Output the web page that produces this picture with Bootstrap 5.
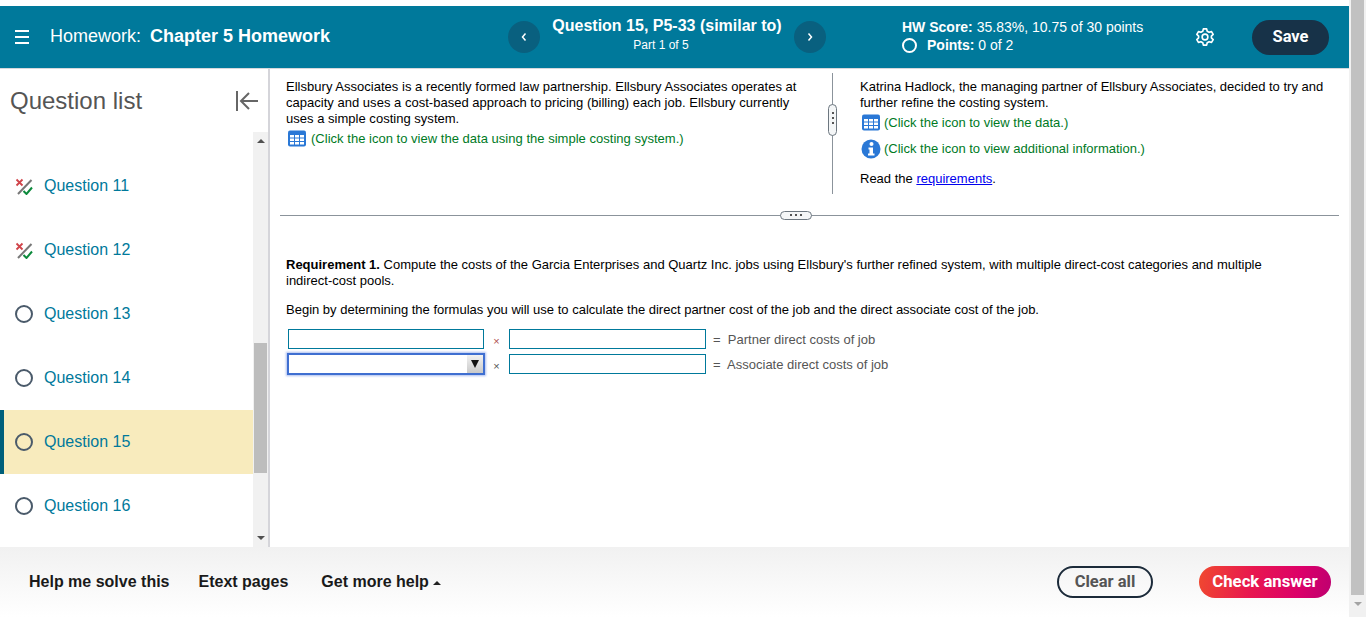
<!DOCTYPE html>
<html lang="en">
<head>
<meta charset="utf-8">
<title>Homework</title>
<link href="https://cdn.jsdelivr.net/npm/bootstrap@5.3.0/dist/css/bootstrap.min.css" rel="stylesheet">
<style>
html,body{height:617px;overflow:hidden;background:#fff;}
body{font-family:"Liberation Sans",Arial,sans-serif;color:#000;}
.shell{width:1366px;height:617px;}
.page-col{width:1349px;height:617px;padding-top:6px;}
.win-bar{width:17px;height:617px;background:#f1f1f1;}
.win-thumb{width:13px;height:595px;margin:0 auto;background:#c1c1c1;}
.win-arrow{width:0;height:0;border-left:4px solid transparent;border-right:4px solid transparent;border-top:4px solid #a3a3a3;margin:7px auto 0;}
.topbar{height:62px;background:#00799b;color:#fff;}
.burger{width:14px;margin-left:15px;margin-right:21px;margin-top:-1px;}
.burger span{display:block;height:2px;background:#fff;margin-bottom:4px;}
.burger span:last-child{margin-bottom:0;}
.hw-title{font-size:18px;width:454px;white-space:nowrap;margin-top:-2px;}
.hw-title b{margin-left:-1px;}
.nav-circle{width:32px;height:32px;border-radius:50%;background:#09607f;color:#fff;}
.q-head{width:254px;line-height:1.2;margin-top:-6px;}
.q-head .q1{font-size:16px;font-weight:700;}
.q-head .q2{font-size:12px;margin-top:3px;padding-right:12px;}
.score{font-size:14px;line-height:18px;margin-left:76px;width:294px;white-space:nowrap;margin-top:-2px;}
.score-ring{width:15px;height:15px;border:2px solid #fff;border-radius:50%;margin-right:10px;}
.save-btn{background:#173248;color:#fff;font-family:Roboto,"Liberation Sans",sans-serif;font-weight:700;font-size:16.500px;width:77px;height:35px;border-radius:18px;border:0;padding:0;margin-left:38px;}
.middle{height:479px;border-top:1px solid #d5d8dc;}
.side{width:270px;border-right:2px solid #d5d5da;}
.side-head{height:63px;padding:0 10px;}
.side-title{font-size:24px;color:#555;}
.side-body{height:415px;}
.q-list{width:253px;padding-top:22px;}
.q-row{height:64px;padding-left:15px;color:#00799b;font-size:16px;}
.q-row.now{background:#f8ebbd;border-left:4px solid #005f7a;padding-left:11px;}
.q-ring{width:18px;height:18px;border:2px solid #4a5a6a;border-radius:50%;margin-right:11px;}
.q-ico{width:18px;height:18px;margin-right:11px;}
.side-track{width:15px;background:#f1f1f1;}
.track-up,.track-down{width:0;height:0;border-left:4px solid transparent;border-right:4px solid transparent;}
.track-up{border-bottom:4px solid #505050;margin:7px auto 0;}
.track-down{border-top:4px solid #505050;margin:0 auto 7px;}
.track-thumb{height:130px;width:13px;margin:200px auto 61px;background:#bdbdbd;}
.work{flex:1;min-width:0;font-size:13px;line-height:16px;}
.panes{height:125px;padding-top:10px;}
.pane-l{width:562px;padding-left:16px;padding-right:30px;height:115px;letter-spacing:.02px;}
.pane-r{flex:1;padding-left:27px;padding-right:10px;}
.v-split{width:1px;height:121px;background:#8b939b;position:relative;margin-top:-6px;}
.v-grip{position:absolute;left:-4px;top:31px;width:9px;height:32px;background:#f4f6f7;border:1px solid #6d7780;border-radius:5px;}
.dots-v{display:flex;flex-direction:column;align-items:center;gap:3px;padding-top:7px;}
.dots-v i,.dots-h i{display:block;width:2px;height:2px;background:#555;}
.hint{color:#007a1f;}
.hint-line{display:flex;align-items:center;gap:4px;}
.hint-first{margin-top:3px;margin-left:1px;}
.hint-data{margin-top:3px;margin-left:1px;gap:3px;}
.hint-info{margin-top:8px;margin-left:1px;gap:3px;height:20px;}
.read-line{margin-top:12px;}
.req-link{color:#0000ee;}
.h-split{height:1px;background:#8b939b;margin:21px 10px 0;position:relative;}
.h-grip{position:absolute;left:500px;top:-4px;width:32px;height:9px;background:#f4f6f7;border:1px solid #6d7780;border-radius:5px;}
.dots-h{display:flex;justify-content:center;gap:3px;padding-top:2px;}
.req{padding:41px 16px 0;}
.req p{margin:0;}
.req .gap-p{margin-top:13px;}
.formula{margin-top:10px;margin-left:2px;color:#555;}
.formula-row{height:21px;margin-bottom:4px;}
.cell{width:196px;height:20px;border:1px solid #00799b;background:#fff;}
.cell-b{width:197px;}
.times{width:25px;text-align:center;font-size:11px;margin-top:4px;}
.times.red{color:#b0504f;}
.eq{margin-left:7px;margin-top:2px;}
.pick{width:198px;height:22px;margin-left:-1px;margin-right:-1px;border:2px solid #3f6fd1;box-shadow:0 0 2px 1px rgba(70,110,220,.45);background:#fff;}
.pick-btn{width:16px;background:linear-gradient(#f2f2f2,#c9c9c9);}
.tri-d{width:0;height:0;border-left:4px solid transparent;border-right:4px solid transparent;border-top:8px solid #111;}
.foot{height:70px;background:linear-gradient(#f1f1f1,#fff);padding-left:29px;padding-right:18px;}
.foot-link{font-size:16px;font-weight:700;color:#1a1a1a;white-space:nowrap;}
.foot-link + .foot-link{margin-left:29px;}
.foot-link.more{margin-left:33px;}
.tri-u{display:inline-block;width:0;height:0;border-left:4px solid transparent;border-right:4px solid transparent;border-bottom:4px solid #222;vertical-align:2px;}
.clear-btn{width:96px;height:32px;border:2px solid #1c2b3a;border-radius:16px;background:transparent;color:#555;font-family:Roboto,"Liberation Sans",sans-serif;font-weight:700;font-size:16.500px;padding:0;}
.check-btn{width:132px;height:32px;border:0;border-radius:16px;margin-left:46px;background:linear-gradient(100deg,#f0492f 0%,#e8174f 40%,#dc0069 75%,#bd0070 100%);color:#fff;font-family:Roboto,"Liberation Sans",sans-serif;font-weight:700;font-size:16.700px;padding:0;}
</style>
</head>
<body>
<div class="shell d-flex">
  <div class="page-col d-flex flex-column">
    <header class="topbar d-flex align-items-center">
      <div class="burger"><span></span><span></span><span></span></div>
      <div class="hw-title">Homework:&nbsp; <b>Chapter 5 Homework</b></div>
      <div class="nav-circle d-flex align-items-center justify-content-center flex-shrink-0 ms-1">
        <svg width="8" height="10" viewBox="0 0 8 10"><path d="M5.500 1.500 2.500 5l3 3.500" fill="none" stroke="#fff" stroke-width="1.500"/></svg>
      </div>
      <div class="q-head text-center flex-shrink-0">
        <div class="q1">Question 15, P5-33 (similar to)</div>
        <div class="q2">Part 1 of 5</div>
      </div>
      <div class="nav-circle d-flex align-items-center justify-content-center flex-shrink-0">
        <svg width="8" height="10" viewBox="0 0 8 10"><path d="M2.500 1.500 5.500 5l-3 3.500" fill="none" stroke="#fff" stroke-width="1.500"/></svg>
      </div>
      <div class="score flex-shrink-0">
        <div><b>HW Score:</b> 35.83%, 10.75 of 30 points</div>
        <div class="d-flex align-items-center"><span class="score-ring d-inline-block"></span><span><b>Points:</b> 0 of 2</span></div>
      </div>
      <svg class="flex-shrink-0" width="18" height="18" viewBox="1 1 22 22" fill="none" stroke="#fff" stroke-width="2" stroke-linejoin="round"><path d="M10 2h4l.7 3 2.300 1.300 3-.9 2 3.400-2.200 2.200v2l2.200 2.200-2 3.400-3-.9-2.300 1.300-.7 3h-4l-.7-3L7 17.700l-3 .9-2-3.400L4.200 13v-2L2 8.800l2-3.400 3 .9L9.300 5z"/><circle cx="12" cy="12" r="3.500"/></svg>
      <button class="save-btn flex-shrink-0" type="button">Save</button>
    </header>
    <div class="middle d-flex">
      <aside class="side d-flex flex-column flex-shrink-0">
        <div class="side-head d-flex align-items-center justify-content-between">
          <span class="side-title">Question list</span>
          <svg width="24" height="20" viewBox="0 0 24 20" fill="none" stroke="#666" stroke-width="2"><path d="M3 0v20M24 10H7M15 2l-8 8 8 8"/></svg>
        </div>
        <div class="side-body d-flex">
          <div class="q-list flex-shrink-0">
            <div class="q-row d-flex align-items-center">
              <svg class="q-ico" viewBox="0 0 18 18" fill="none"><path d="M1.500 2.500l6 6M7.500 2.500l-6 6" stroke="#d0444a" stroke-width="1.800"/><path d="M16.500 3 3 17" stroke="#777" stroke-width="2"/><path d="M8.500 14l3 3 5.500-6.500" stroke="#0c8a3c" stroke-width="2"/></svg>
              Question 11</div>
            <div class="q-row d-flex align-items-center">
              <svg class="q-ico" viewBox="0 0 18 18" fill="none"><path d="M1.500 2.500l6 6M7.500 2.500l-6 6" stroke="#d0444a" stroke-width="1.800"/><path d="M16.500 3 3 17" stroke="#777" stroke-width="2"/><path d="M8.500 14l3 3 5.500-6.500" stroke="#0c8a3c" stroke-width="2"/></svg>
              Question 12</div>
            <div class="q-row d-flex align-items-center"><span class="q-ring d-inline-block"></span>Question 13</div>
            <div class="q-row d-flex align-items-center"><span class="q-ring d-inline-block"></span>Question 14</div>
            <div class="q-row now d-flex align-items-center"><span class="q-ring d-inline-block"></span>Question 15</div>
            <div class="q-row d-flex align-items-center"><span class="q-ring d-inline-block"></span>Question 16</div>
          </div>
          <div class="side-track d-flex flex-column">
            <div class="track-up"></div>
            <div class="track-thumb"></div>
            <div class="flex-grow-1"></div>
            <div class="track-down"></div>
          </div>
        </div>
      </aside>
      <main class="work">
        <div class="panes d-flex">
          <div class="pane-l flex-shrink-0">
            <div>Ellsbury Associates is a recently formed law partnership. Ellsbury Associates operates at capacity and uses a cost-based approach to pricing (billing) each job. Ellsbury currently uses a simple costing system.</div>
            <div class="hint hint-line hint-first">
              <svg class="flex-shrink-0" width="20" height="17" viewBox="0 0 20 17"><rect x="1" y="0.500" width="18" height="16" rx="2" fill="#2a78d6"/><g fill="#fff"><rect x="3" y="5" width="4" height="2.500"/><rect x="8" y="5" width="4" height="2.500"/><rect x="13" y="5" width="4" height="2.500"/><rect x="3" y="8.500" width="4" height="2.500"/><rect x="8" y="8.500" width="4" height="2.500"/><rect x="13" y="8.500" width="4" height="2.500"/><rect x="3" y="12" width="4" height="2.500"/><rect x="8" y="12" width="4" height="2.500"/><rect x="13" y="12" width="4" height="2.500"/></g></svg>
              <span>(Click the icon to view the data using the simple costing system.)</span>
            </div>
          </div>
          <div class="v-split flex-shrink-0"><div class="v-grip"><div class="dots-v"><i></i><i></i><i></i></div></div></div>
          <div class="pane-r">
            <div>Katrina Hadlock, the managing partner of Ellsbury Associates, decided to try and further refine the costing system.</div>
            <div class="hint hint-line hint-data">
              <svg class="flex-shrink-0" width="20" height="17" viewBox="0 0 20 17"><rect x="1" y="0.500" width="18" height="16" rx="2" fill="#2a78d6"/><g fill="#fff"><rect x="3" y="5" width="4" height="2.500"/><rect x="8" y="5" width="4" height="2.500"/><rect x="13" y="5" width="4" height="2.500"/><rect x="3" y="8.500" width="4" height="2.500"/><rect x="8" y="8.500" width="4" height="2.500"/><rect x="13" y="8.500" width="4" height="2.500"/><rect x="3" y="12" width="4" height="2.500"/><rect x="8" y="12" width="4" height="2.500"/><rect x="13" y="12" width="4" height="2.500"/></g></svg>
              <span>(Click the icon to view the data.)</span>
            </div>
            <div class="hint hint-line hint-info">
              <svg class="flex-shrink-0" width="20" height="20" viewBox="0 0 20 20"><circle cx="10" cy="10" r="9.500" fill="#2a78d6"/><circle cx="10.500" cy="5" r="2" fill="#fff"/><path d="M7.500 8.500h4.500v6h1.500v2h-6.500v-2h1.500v-4h-1z" fill="#fff"/></svg>
              <span>(Click the icon to view additional information.)</span>
            </div>
            <div class="read-line">Read the <a href="#" class="req-link">requirements</a>.</div>
          </div>
        </div>
        <div class="h-split"><div class="h-grip"><div class="dots-h"><i></i><i></i><i></i></div></div></div>
        <div class="req">
          <p><b>Requirement 1.</b> Compute the costs of the Garcia Enterprises and Quartz Inc. jobs using Ellsbury's further refined system, with multiple direct-cost categories and multiple <span class="text-nowrap">indirect-cost</span> pools.</p>
          <p class="gap-p">Begin by determining the formulas you will use to calculate the direct partner cost of the job and the direct associate cost of the job.</p>
          <div class="formula">
            <div class="formula-row d-flex align-items-center">
              <div class="cell"></div><div class="times red">×</div><div class="cell cell-b"></div><div class="eq">=&nbsp; Partner direct costs of job</div>
            </div>
            <div class="formula-row d-flex align-items-center">
              <div class="pick d-flex justify-content-end"><div class="pick-btn d-flex align-items-center justify-content-center"><span class="tri-d"></span></div></div>
              <div class="times">×</div><div class="cell cell-b"></div><div class="eq">=&nbsp; Associate direct costs of job</div>
            </div>
          </div>
        </div>
      </main>
    </div>
    <footer class="foot d-flex align-items-center">
      <span class="foot-link">Help me solve this</span>
      <span class="foot-link">Etext pages</span>
      <span class="foot-link more">Get more help <span class="tri-u"></span></span>
      <div class="ms-auto d-flex align-items-center">
        <button class="clear-btn" type="button">Clear all</button>
        <button class="check-btn" type="button">Check answer</button>
      </div>
    </footer>
  </div>
  <div class="win-bar d-flex flex-column">
    <div class="win-thumb"></div>
    <div class="win-arrow"></div>
  </div>
</div>
</body>
</html>
